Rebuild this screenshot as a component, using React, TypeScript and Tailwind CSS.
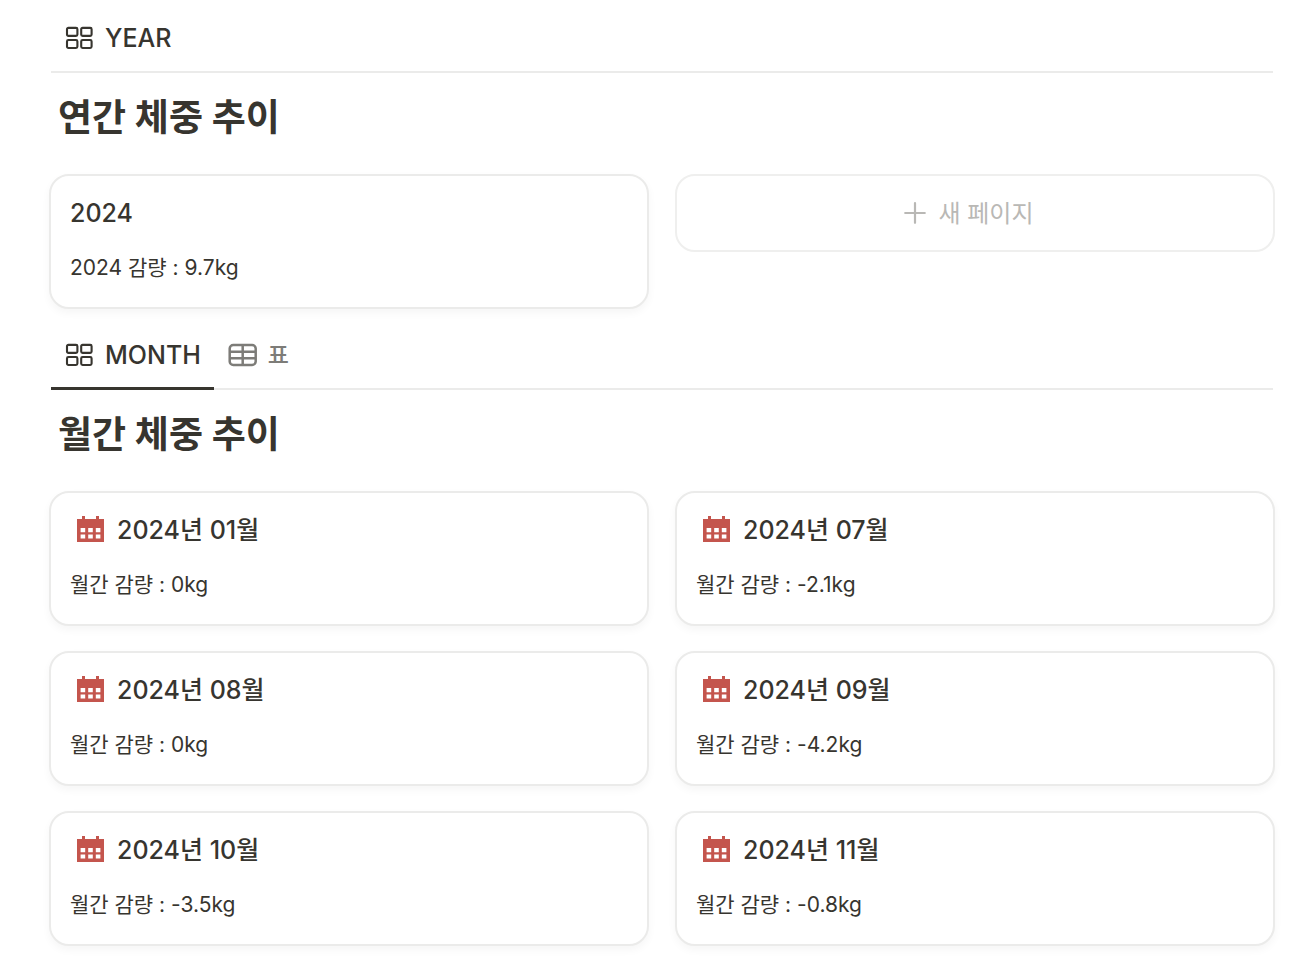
const MONTHS = [
  { title: '2024년 01월', loss: '0kg' },
  { title: '2024년 07월', loss: '-2.1kg' },
  { title: '2024년 08월', loss: '0kg' },
  { title: '2024년 09월', loss: '-4.2kg' },
  { title: '2024년 10월', loss: '-3.5kg' },
  { title: '2024년 11월', loss: '-0.8kg' },
]

function GalleryIcon() {
  return (
    <svg width="28" height="24" viewBox="0 0 28 24" fill="none" stroke="currentColor" strokeWidth="2.1" aria-hidden="true">
      <rect x="2" y="1.9" width="10.4" height="8" rx="1.4" />
      <rect x="16.2" y="1.9" width="10.4" height="8" rx="1.4" />
      <rect x="2" y="14" width="10.4" height="8" rx="1.4" />
      <rect x="16.2" y="14" width="10.4" height="8" rx="1.4" />
    </svg>
  )
}

function TableIcon() {
  return (
    <svg width="30" height="24" viewBox="0 0 30 24" fill="none" stroke="currentColor" strokeWidth="2.5" aria-hidden="true">
      <rect x="1.7" y="2" width="26" height="20" rx="3.6" />
      <path d="M1.700 8.800h26M1.700 15.200h26M14.700 2v20" />
    </svg>
  )
}

function CalendarIcon() {
  return (
    <svg width="27" height="26" viewBox="0 0 27 26" className="mr-[13px] mb-0.5 ml-[7px] shrink-0" aria-hidden="true">
      <path
        fill="#c4554d"
        fillRule="evenodd"
        d="M5 0h3v3h11V0h3v3h5v23H0V3h5zM3.600 12v4.200h4.600V12zM11.200 12v4.200h4.600V12zM18.800 12v4.200h4.600V12zM3.600 18.400v4.200h4.600v-4.200zM11.200 18.400v4.200h4.600v-4.200zM18.800 18.400v4.200h4.600v-4.200z"
      />
    </svg>
  )
}

function Card({ title, body, icon }: { title: string; body: string; icon?: boolean }) {
  return (
    <a
      href="#"
      className="block rounded-[20px] border-2 border-[#ebebea] bg-white px-[19px] pt-[19px] pb-[23px] shadow-[0_4px_8px_rgba(15,15,15,0.04)]"
    >
      <h3 className="flex items-center text-[25px] leading-9 font-medium">
        {icon && <CalendarIcon />}
        {title}
      </h3>
      <p className="mt-[21px] text-[21px] leading-8">{body}</p>
    </a>
  )
}

export default function App() {
  return (
    <main className="bg-white pt-[3px] pr-[35px] pb-6 pl-[49px] font-['Inter','Noto_Sans_CJK_KR',sans-serif] text-[#37352f]">
      <section>
        <nav className="mx-0.5 flex h-[70px] border-b-2 border-[#ebebea]">
          <button type="button" className="flex items-center gap-3 px-3.5 pt-0.5 text-[25px] font-medium">
            <GalleryIcon />
            <span className="pt-0.5">YEAR</span>
          </button>
        </nav>
        <h2 className="px-[9px] pt-[21px] pb-8 text-[37px] leading-12 font-bold">연간 체중 추이</h2>
        <div className="grid grid-cols-2 items-start gap-x-[26px] gap-y-[25px]">
          <Card title="2024" body="2024 감량 : 9.7kg" />
          <button
            type="button"
            className="flex h-[78px] items-center justify-center gap-3 rounded-[20px] border-2 border-[#efefee] pr-3 text-[24px] text-[#b9b8b5]"
          >
            <svg width="22" height="22" viewBox="0 0 22 22" stroke="currentColor" strokeWidth="2.2" strokeLinecap="round" aria-hidden="true">
              <path d="M11 1.200v19.600M1.200 11h19.600" />
            </svg>
            <span className="pt-0.5">새 페이지</span>
          </button>
        </div>
      </section>

      <section className="mt-[11px]">
        <nav className="mx-0.5 flex h-[70px] border-b-2 border-[#ebebea]">
          <button
            type="button"
            className="-mb-0.5 flex items-center gap-3 border-b-3 border-[#37352f] pt-[3px] pr-[13px] pl-3.5 text-[25px] font-medium"
          >
            <GalleryIcon />
            <span className="pt-0.5">MONTH</span>
          </button>
          <button type="button" className="flex items-center gap-2.5 px-3.5 pt-0.5 text-[23px] font-medium text-[#7d7c78]">
            <TableIcon />
            <span>표</span>
          </button>
        </nav>
        <h2 className="px-[9px] pt-[21px] pb-8 text-[37px] leading-12 font-bold">월간 체중 추이</h2>
        <div className="grid grid-cols-2 gap-x-[26px] gap-y-[25px]">
          {MONTHS.map((month) => (
            <Card key={month.title} title={month.title} body={`월간 감량 : ${month.loss}`} icon />
          ))}
        </div>
      </section>
    </main>
  )
}
